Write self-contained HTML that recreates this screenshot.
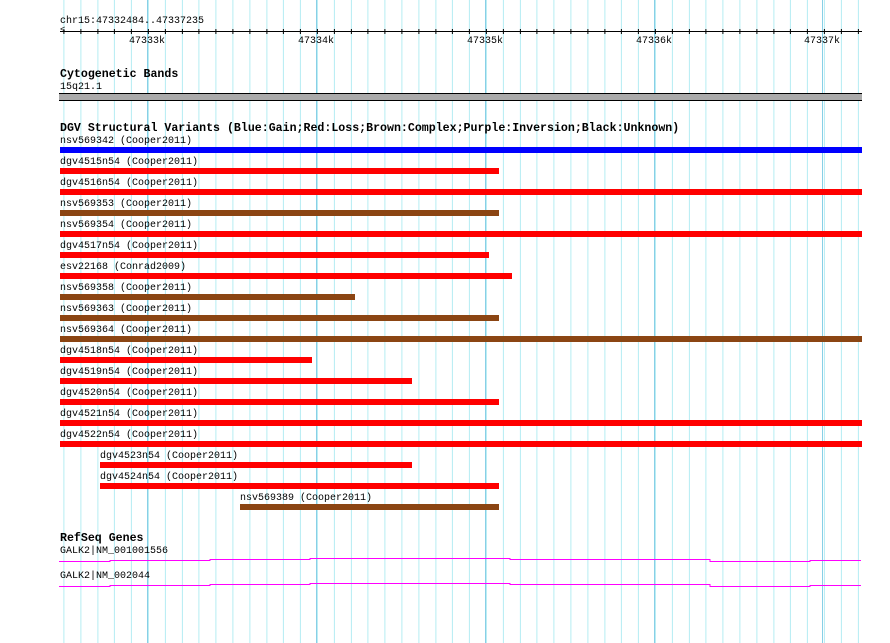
<!DOCTYPE html>
<html><head><style>
body{margin:0;width:890px;height:643px;background:#fff;position:relative;overflow:hidden;font-family:"Liberation Mono",monospace;}
.grid{position:absolute;left:60px;top:0;width:802px;height:643px;
background-image:repeating-linear-gradient(to right,#b4ecf2 0,#b4ecf2 1px,transparent 1px,transparent 16.9px);
background-position:3.4px 0;}
.major{position:absolute;top:0;width:1px;height:643px;background:#88cfe6;}
.t{position:absolute;font-size:10px;line-height:11px;color:#000;white-space:pre;}
.b{position:absolute;font-size:11.6px;font-weight:bold;line-height:12px;white-space:pre;}
.bar{position:absolute;height:6px;}
.r{background:#ff0000}.br{background:#8b4513}.bl{background:#0000ff}
</style></head><body>
<div class="grid"></div>
<div class="major" style="left:147px"></div>
<div class="major" style="left:316px"></div>
<div class="major" style="left:485px"></div>
<div class="major" style="left:654px"></div>
<div class="major" style="left:822px"></div>
<!-- ruler -->
<div class="t" style="left:60px;top:16px">chr15:47332484..47337235</div>
<div style="position:absolute;left:60px;top:31px;width:802px;height:1px;background:#000"></div>
<div style="position:absolute;left:60px;top:29px;width:802px;height:5px;background-image:repeating-linear-gradient(to right,#000 0,#000 1px,transparent 1px,transparent 16.9px);background-position:3.4px 0"></div>
<div style="position:absolute;left:60px;top:26px;font-size:9px;line-height:9px">&lt;</div>
<div class="t" style="left:129px;top:36px">47333k</div>
<div class="t" style="left:298px;top:36px">47334k</div>
<div class="t" style="left:467px;top:36px">47335k</div>
<div class="t" style="left:636px;top:36px">47336k</div>
<div class="t" style="left:804px;top:36px">47337k</div>
<!-- cyto -->
<div class="b" style="left:60px;top:69px">Cytogenetic Bands</div>
<div class="t" style="left:60px;top:82px">15q21.1</div>
<div style="position:absolute;left:59px;top:93px;width:803px;height:6px;background:#aaa;border-top:1px solid #000;border-bottom:1px solid #000"></div>
<!-- DGV -->
<div class="b" style="left:60px;top:123px">DGV Structural Variants (Blue:Gain;Red:Loss;Brown:Complex;Purple:Inversion;Black:Unknown)</div>
<div class="t" style="left:60px;top:136px">nsv569342 (Cooper2011)</div><div class="bar bl" style="left:60px;top:147px;width:802px"></div>
<div class="t" style="left:60px;top:157px">dgv4515n54 (Cooper2011)</div><div class="bar r" style="left:60px;top:168px;width:439px"></div>
<div class="t" style="left:60px;top:178px">dgv4516n54 (Cooper2011)</div><div class="bar r" style="left:60px;top:189px;width:802px"></div>
<div class="t" style="left:60px;top:199px">nsv569353 (Cooper2011)</div><div class="bar br" style="left:60px;top:210px;width:439px"></div>
<div class="t" style="left:60px;top:220px">nsv569354 (Cooper2011)</div><div class="bar r" style="left:60px;top:231px;width:802px"></div>
<div class="t" style="left:60px;top:241px">dgv4517n54 (Cooper2011)</div><div class="bar r" style="left:60px;top:252px;width:429px"></div>
<div class="t" style="left:60px;top:262px">esv22168 (Conrad2009)</div><div class="bar r" style="left:60px;top:273px;width:452px"></div>
<div class="t" style="left:60px;top:283px">nsv569358 (Cooper2011)</div><div class="bar br" style="left:60px;top:294px;width:295px"></div>
<div class="t" style="left:60px;top:304px">nsv569363 (Cooper2011)</div><div class="bar br" style="left:60px;top:315px;width:439px"></div>
<div class="t" style="left:60px;top:325px">nsv569364 (Cooper2011)</div><div class="bar br" style="left:60px;top:336px;width:802px"></div>
<div class="t" style="left:60px;top:346px">dgv4518n54 (Cooper2011)</div><div class="bar r" style="left:60px;top:357px;width:252px"></div>
<div class="t" style="left:60px;top:367px">dgv4519n54 (Cooper2011)</div><div class="bar r" style="left:60px;top:378px;width:352px"></div>
<div class="t" style="left:60px;top:388px">dgv4520n54 (Cooper2011)</div><div class="bar r" style="left:60px;top:399px;width:439px"></div>
<div class="t" style="left:60px;top:409px">dgv4521n54 (Cooper2011)</div><div class="bar r" style="left:60px;top:420px;width:802px"></div>
<div class="t" style="left:60px;top:430px">dgv4522n54 (Cooper2011)</div><div class="bar r" style="left:60px;top:441px;width:802px"></div>
<div class="t" style="left:100px;top:451px">dgv4523n54 (Cooper2011)</div><div class="bar r" style="left:100px;top:462px;width:312px"></div>
<div class="t" style="left:100px;top:472px">dgv4524n54 (Cooper2011)</div><div class="bar r" style="left:100px;top:483px;width:399px"></div>
<div class="t" style="left:240px;top:493px">nsv569389 (Cooper2011)</div><div class="bar br" style="left:240px;top:504px;width:259px"></div>
<!-- RefSeq -->
<div class="b" style="left:60px;top:533px">RefSeq Genes</div>
<div class="t" style="left:60px;top:546px">GALK2|NM_001001556</div>
<div class="t" style="left:60px;top:571px">GALK2|NM_002044</div>
<svg style="position:absolute;left:0;top:0" width="890" height="643" shape-rendering="crispEdges">
<polyline fill="none" stroke="#ff00ff" stroke-width="1" points="59,561.5 110,561.5 110,560.5 210,560.5 210,559.5 310,559.5 310,558.5 510,558.5 510,559.5 710,559.5 710,561.5 810,561.5 810,560.5 861,560.5"/>
<polyline fill="none" stroke="#ff00ff" stroke-width="1" points="59,586.5 110,586.5 110,585.5 210,585.5 210,584.5 310,584.5 310,583.5 510,583.5 510,584.5 710,584.5 710,586.5 810,586.5 810,585.5 861,585.5"/>
</svg>
</body></html>
